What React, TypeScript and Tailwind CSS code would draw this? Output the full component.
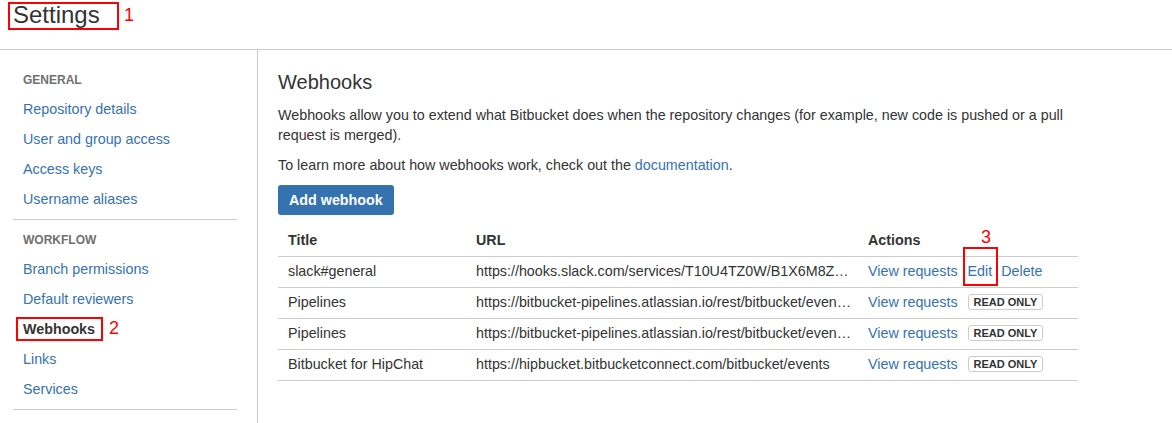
const linkStyle = 'text-[#3572b0] hover:underline';
const navItemStyle = 'block h-[30px] leading-[30px] text-[14.3px]';
const navHeadingStyle = 'h-5 leading-5 text-xs font-bold uppercase text-[#707070]';
const cellStyle = 'px-[10px] align-middle';
const annoBox = 'pointer-events-none absolute border-2 border-[#ff0000]';
const annoNum = 'pointer-events-none absolute text-[18px] leading-none text-[#ff0000]';

const general = ['Repository details', 'User and group access', 'Access keys', 'Username aliases'];
const workflow = ['Branch permissions', 'Default reviewers', 'Webhooks', 'Links', 'Services'];

const hooks = [
  {
    title: 'slack#general',
    url: 'https://hooks.slack.com/services/T10U4TZ0W/B1X6M8ZQY/hKd83jsPq0xZ',
    readOnly: false,
  },
  {
    title: 'Pipelines',
    url: 'https://bitbucket-pipelines.atlassian.io/rest/bitbucket/event/connect/onpush',
    readOnly: true,
  },
  {
    title: 'Pipelines',
    url: 'https://bitbucket-pipelines.atlassian.io/rest/bitbucket/evented/connect/onpullrequest',
    readOnly: true,
  },
  {
    title: 'Bitbucket for HipChat',
    url: 'https://hipbucket.bitbucketconnect.com/bitbucket/events',
    readOnly: true,
  },
];

const Sidebar = () => (
  <nav className="w-[258px] shrink-0 border-r border-[#ccc] pt-5 pl-[13px] pr-5">
    <div className={navHeadingStyle + ' pl-[10px] mb-1'}>General</div>
    <ul className="pl-[10px]">
      {general.map((item) => (
        <li key={item}>
          <a href="#" className={navItemStyle + ' ' + linkStyle}>
            {item}
          </a>
        </li>
      ))}
    </ul>
    <div className="mt-[5px] border-t border-[#ccc]" />
    <div className={navHeadingStyle + ' pl-[10px] mt-[10px] mb-1'}>Workflow</div>
    <ul className="pl-[10px]">
      {workflow.map((item) =>
        item === 'Webhooks' ? (
          <li key={item}>
            <span className={navItemStyle + ' font-bold text-[#333]'}>{item}</span>
          </li>
        ) : (
          <li key={item}>
            <a href="#" className={navItemStyle + ' ' + linkStyle}>
              {item}
            </a>
          </li>
        )
      )}
    </ul>
    <div className="mt-[5px] border-t border-[#ccc]" />
  </nav>
);

const App = () => {
  return (
    <div
      className="relative min-h-[423px] bg-white text-[#333]"
      style={{ fontFamily: '"Liberation Sans", Arial, sans-serif' }}
    >
      <header className="h-[50px] border-b border-[#ccc] pl-[13px]">
        <h1 className="text-[24px] leading-[30px]">Settings</h1>
      </header>

      <div className="flex min-h-[373px]">
        <Sidebar />

        <main className="pl-5 pt-5 w-[840px]">
          <h2 className="text-[20px] leading-6">Webhooks</h2>
          <p className="mt-[11px] text-[14.3px] leading-5 w-[800px]">
            Webhooks allow you to extend what Bitbucket does when the repository changes (for example, new code is
            pushed or a pull request is merged).
          </p>
          <p className="mt-[10px] text-[14.3px] leading-5">
            To learn more about how webhooks work, check out the{' '}
            <a href="#" className={linkStyle}>
              documentation
            </a>
            .
          </p>
          <button className="mt-[10px] block h-[30px] rounded-[3px] bg-[#3572b0] px-[11px] text-[14.3px] leading-[30px] font-bold text-white">
            Add webhook
          </button>

          <table className="mt-[11px] w-[800px] table-fixed border-collapse text-[14.3px]">
            <thead>
              <tr className="border-b border-[#ccc]">
                <th className={cellStyle + ' h-[30px] w-[188px] text-left font-bold'}>Title</th>
                <th className={cellStyle + ' h-[30px] w-[392px] text-left font-bold'}>URL</th>
                <th className={cellStyle + ' h-[30px] text-left font-bold'}>Actions</th>
              </tr>
            </thead>
            <tbody>
              {hooks.map((hook, i) => (
                <tr key={i} className="border-b border-[#ccc]">
                  <td className={cellStyle + ' h-[31px]'}>{hook.title}</td>
                  <td className={cellStyle + ' h-[31px]'}>
                    <div className="w-[376px] truncate">{hook.url}</div>
                  </td>
                  <td className={cellStyle + ' h-[31px] whitespace-nowrap'}>
                    <a href="#" className={linkStyle}>
                      View requests
                    </a>
                    {hook.readOnly ? (
                      <span className="ml-[10px] inline-block h-4 rounded-[3px] border border-[#ccc] px-[5px] align-[1px] text-[11px] leading-[14px] font-bold text-[#333]">
                        READ ONLY
                      </span>
                    ) : (
                      <>
                        <a href="#" className={linkStyle + ' ml-[10px]'}>
                          Edit
                        </a>
                        <a href="#" className={linkStyle + ' ml-[9px]'}>
                          Delete
                        </a>
                      </>
                    )}
                  </td>
                </tr>
              ))}
            </tbody>
          </table>
        </main>
      </div>

      {/* red annotations drawn over the screenshot */}
      <div className={annoBox + ' left-[8px] top-[2px] h-[28px] w-[111px]'} />
      <span className={annoNum + ' left-[124px] top-[6px]'}>1</span>
      <div className={annoBox + ' left-[16px] top-[317px] h-[24px] w-[87px]'} />
      <span className={annoNum + ' left-[109px] top-[319px]'}>2</span>
      <div className={annoBox + ' left-[963px] top-[247px] h-[39px] w-[35px]'} />
      <span className={annoNum + ' left-[981px] top-[228px]'}>3</span>
    </div>
  );
};

export default App;
